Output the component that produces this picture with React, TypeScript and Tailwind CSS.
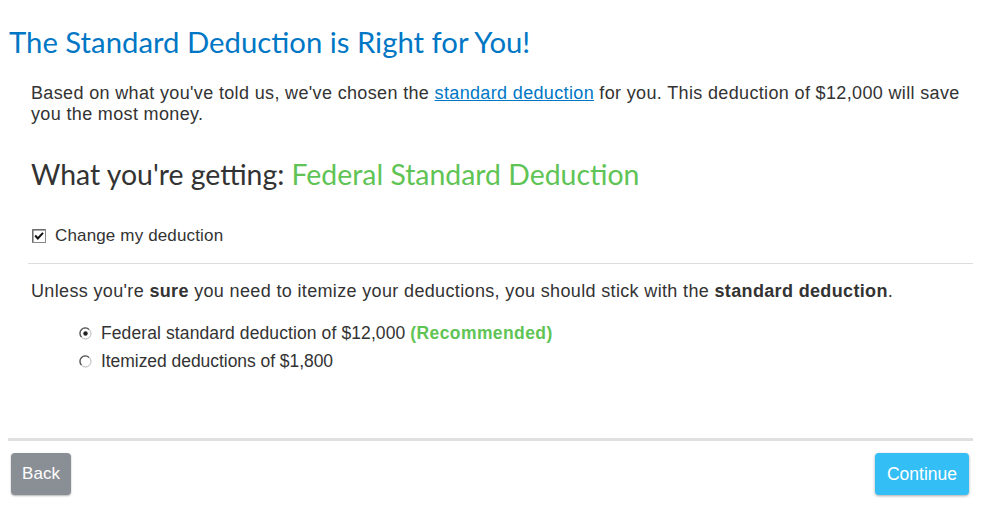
import React from "react";

function Radio({ checked }: { checked?: boolean }) {
  return (
    <svg width="13" height="13" viewBox="0 0 13 13" className="shrink-0">
      <circle cx="6.5" cy="6.5" r="5.5" fill="#fff" stroke="#b5b5b5" strokeWidth="1" />
      <path d="M2.5 10 A5 5 0 0 1 10 2.5" fill="none" stroke="#555" strokeWidth="1.3" />
      {checked && <circle cx="6.5" cy="6.5" r="2.2" fill="#222" />}
    </svg>
  );
}

function Checkbox() {
  return (
    <svg width="14" height="14" viewBox="0 0 14 14" className="shrink-0">
      <rect x="0.5" y="0.5" width="13" height="13" fill="#fff" stroke="#888" />
      <path d="M1 1 H13" stroke="#555" strokeWidth="1" />
      <path d="M1 1 V13" stroke="#555" strokeWidth="1" />
      <path d="M3.2 6.5 L5.8 9.5 L11 3.8" fill="none" stroke="#111" strokeWidth="2" />
    </svg>
  );
}

export default function App() {
  return (
    <div className="w-[983px] h-[509px] bg-white overflow-hidden" style={{ fontFamily: "'Liberation Sans', Arial, sans-serif" }}>
      <div className="pt-[24px] pl-[9px]">
        <h1 className="text-[29.3px] leading-[36px] text-[#0077c5] font-normal" style={{ fontFamily: "Lato, 'Noto Sans', sans-serif" }}>
          The Standard Deduction is Right for You!
        </h1>
      </div>
      <div className="pl-[31px] pr-[18px] mt-[23px] text-[18px] leading-[21px] tracking-[0.35px] text-[#333]">
        <p>
          Based on what you've told us, we've chosen the{" "}
          <span className="text-[#0077c5] underline">standard deduction</span> for you. This deduction of $12,000 will save you the most money.
        </p>
      </div>
      <div className="pl-[31px] mt-[31px] text-[28.4px] leading-[36px] text-[#333]" style={{ fontFamily: "Lato, 'Noto Sans', sans-serif" }}>
        What you're getting: <span className="text-[#5fc455]">Federal Standard Deduction</span>
      </div>
      <div className="pl-[32px] mt-[34px] flex items-center gap-[9px] text-[17px] tracking-[0.15px] text-[#333] leading-[20px]">
        <Checkbox />
        <span>Change my deduction</span>
      </div>
      <div className="ml-[28px] w-[945px] h-px bg-[#dddddd] mt-[17px]" />
      <p className="pl-[31px] mt-[17px] text-[18px] leading-[21px] tracking-[0.35px] text-[#333]">
        Unless you're <b>sure</b> you need to itemize your deductions, you should stick with the <b>standard deduction</b>.
      </p>
      <div className="pl-[79px] mt-[21px] flex flex-col gap-[7px] text-[17.5px] leading-[21px] tracking-[0.1px] text-[#333]">
        <div className="flex items-center gap-[9px]">
          <Radio checked />
          <span>
            Federal standard deduction of $12,000{" "}
            <b className="text-[#5fc455] tracking-[0.4px]">(Recommended)</b>
          </span>
        </div>
        <div className="flex items-center gap-[9px]">
          <Radio />
          <span className="tracking-[-0.05px]">Itemized deductions of $1,800</span>
        </div>
      </div>
      <div className="ml-[8px] w-[965px] h-[3px] bg-[#e0e0e0] mt-[66px]" />
      <div className="flex justify-between pl-[11px] pr-[14px] mt-[12px]">
        <button className="h-[42px] w-[60px] rounded-[4px] bg-[#8a8f96] text-white text-[17px] shadow-[0_1px_2px_rgba(0,0,0,0.3)]">
          Back
        </button>
        <button className="h-[42px] w-[94px] rounded-[4px] bg-[#33bef5] text-white text-[17.5px] shadow-[0_1px_3px_rgba(0,0,0,0.35)]">
          Continue
        </button>
      </div>
    </div>
  );
}
